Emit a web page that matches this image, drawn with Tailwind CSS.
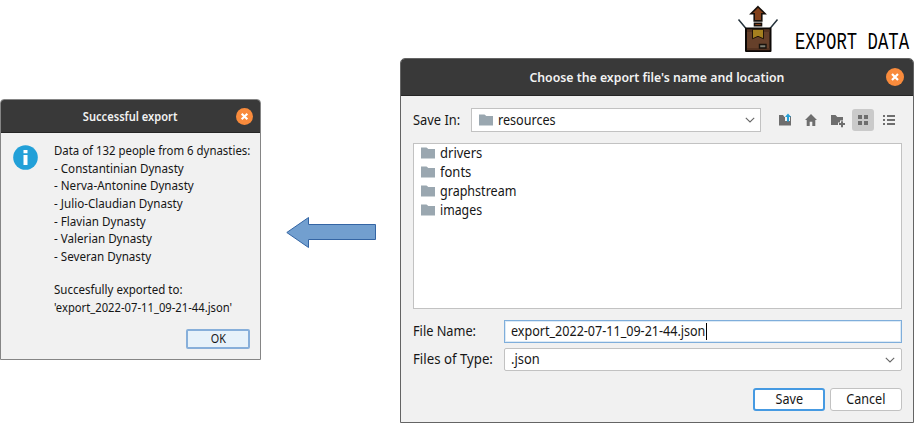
<!DOCTYPE html>
<html lang="en">
<head>
<meta charset="utf-8">
<title>Export data</title>
<script src="https://cdn.jsdelivr.net/npm/@tailwindcss/browser@4"></script>
</head>
<body class="relative h-[425px] w-[916px] overflow-hidden bg-white font-['Noto_Sans',sans-serif] text-[#161616]">

<svg class="hidden">
  <symbol id="folder" viewBox="0 0 14 12"><path d="M0 .5h5.500L7.300 2H14v9.500H0z" fill="#9aa7b0"/></symbol>
  <symbol id="chevron" viewBox="0 0 10 6"><path d="M.8.8 5 5 9.200.8" fill="none" stroke="#666" stroke-width="1.100"/></symbol>
  <symbol id="close" viewBox="0 0 18 18"><circle cx="9" cy="9" r="9" fill="#f98b3c"/><path d="m6 6 6 6m0-6-6 6" stroke="#fff" stroke-width="2.200"/></symbol>
</svg>

<!-- Heading -->
<header class="absolute left-[737px] top-[5px] flex">
  <svg class="h-[48px] w-[42px]" viewBox="0 0 42 48">
    <path d="m1.500 14.500 7.500 9M40.500 14.500l-7.500 9" stroke="#26333c" stroke-width="1.500" fill="none"/>
    <path d="M9 23.500h24.500V46H9z" fill="#66402a" stroke="#0d0907" stroke-width="2" stroke-linejoin="round"/>
    <path d="M10 24.500h22.500v2.500H10zM10 43h22.500v2.200H10z" fill="#553321"/>
    <path d="M15.500 24.300h11v9.500L21 31.300l-5.500 2.500z" fill="#a5801f" stroke="#211508" stroke-width="1"/>
    <path d="M22.500 39.500h6.500v3.500h-6.500z" fill="#7e7e72" stroke="#17120d" stroke-width="1.400"/>
    <path d="m21 1.700 7 7h-3.200v7.200h-7.600V8.700H14zM17.500 18.300h7v2.500h-7z" fill="#83401a" stroke="#17100b" stroke-width="1.600"/>
  </svg>
  <h1 class="ml-[16px] mt-[26px] origin-left scale-x-[.72] whitespace-nowrap font-['Liberation_Mono',monospace] text-[24px] leading-[24px] text-black">EXPORT DATA</h1>
</header>

<!-- Confirmation dialog -->
<section class="absolute left-0 top-[99px] h-[261px] w-[261px] rounded-t-[4px] border border-[#858585] bg-[#f1f1f1]">
  <div class="relative flex h-[33px] items-center justify-center rounded-t-[3px] border-b border-[#252525] bg-[#393939]">
    <h2 class="origin-center scale-x-[.925] whitespace-nowrap pt-px text-[12px] font-semibold text-[#f2f2f2]">Successful export</h2>
    <svg class="absolute right-[7px] top-[8px] size-[17px]"><use href="#close"/></svg>
  </div>
  <div class="flex">
    <svg class="ml-[12px] mt-[12px] size-[25px] shrink-0" viewBox="0 0 25 25"><circle cx="12.500" cy="12.500" r="12.300" fill="#22a0d8"/><path d="M10.500 5h4v3.200h-4zM10.500 10h4v10h-4z" fill="#fff"/></svg>
    <div class="ml-[16px] mt-[9px] w-[200px] origin-left scale-x-[.95] whitespace-nowrap text-[12px] leading-[17.640px]">
      <p>Data of 132 people from 6 dynasties:</p>
      <div class="origin-left scale-x-[1.02]">
        <p>- Constantinian Dynasty</p>
        <p>- Nerva-Antonine Dynasty</p>
        <p>- Julio-Claudian Dynasty</p>
        <p>- Flavian Dynasty</p>
        <p>- Valerian Dynasty</p>
        <p>- Severan Dynasty</p>
      </div>
      <p class="mt-[16px] origin-left scale-x-[1.010]">Succesfully exported to:</p>
      <p class="origin-left scale-x-[.985]">'export_2022-07-11_09-21-44.json'</p>
    </div>
  </div>
  <button class="absolute bottom-[10px] right-[10px] h-[20px] w-[64px] rounded-[2px] border-2 border-[#87afda] bg-[#e7f2fa] text-[12px] leading-[16px]"><span class="inline-block scale-x-[.9]">OK</span></button>
</section>

<svg class="absolute left-[286px] top-[216px] h-[33px] w-[91px]" viewBox="0 0 91 33"><path d="M.8 16.500 22.500 1.500v7H89.500v15H22.500v8z" fill="#729fcf" stroke="#3465a4"/></svg>

<!-- File chooser -->
<section class="absolute left-[400px] top-[58px] flex h-[365px] w-[514px] flex-col rounded-t-[5px] border border-[#646464] bg-[#f1f1f1] text-[14px]">
  <div class="relative flex h-[37px] shrink-0 items-center justify-center rounded-t-[4px] border-b border-[#252525] bg-[#393939]">
    <h2 class="origin-center scale-x-[.945] whitespace-nowrap pt-px text-[13px] font-semibold text-[#f2f2f2]">Choose the export file's name and location</h2>
    <svg class="absolute right-[9px] top-[9px] size-[18px]" viewBox="0 0 18 18"><use href="#close"/></svg>
  </div>

  <div class="ml-[12px] mt-[12px] flex h-[24px] items-center">
    <label class="w-[58px] whitespace-nowrap pb-[2px]"><span class="inline-block origin-left scale-x-[.92]">Save In:</span></label>
    <div class="flex h-[24px] w-[290px] items-center border border-[#c2c2c2] bg-white pl-[7px] pr-[5px]">
      <svg class="h-[12px] w-[14px]"><use href="#folder"/></svg>
      <span class="ml-[5px] origin-left scale-x-[.9] pb-[2px]">resources</span>
      <svg class="ml-auto h-[6px] w-[10px]"><use href="#chevron"/></svg>
    </div>
    <div class="ml-[13px] flex items-center gap-[4px]">
      <svg class="size-[22px]" viewBox="0 0 22 22"><path d="M5 6h4l1.500 2H11v4h5V7h1v9.500H5z" fill="#6e6e6e"/><path d="M13 12.500V8h-2L14 4.500 17 8h-2v4.500z" fill="#22a0d8"/></svg>
      <svg class="size-[22px]" viewBox="0 0 22 22"><path d="m11 5 6 6h-1.700v6h-3v-4.200H9.700V17h-3v-6H5z" fill="#6e6e6e"/></svg>
      <svg class="size-[22px]" viewBox="0 0 22 22"><path d="M5 6h4.500l1.800 2H17v3.500h-3V13.500h-2V16H5z" fill="#6e6e6e"/><path d="M15 12.200h2V14h2v2h-2v2.200h-2V16h-2v-2h2z" fill="#6e6e6e"/></svg>
      <span class="size-[22px] rounded-[3px] bg-[#cacaca]"><svg class="size-[22px]" viewBox="0 0 22 22"><path d="M6 6h4v4H6zM12 6h4v4h-4zM6 12h4v4H6zM12 12h4v4h-4z" fill="#6e6e6e"/></svg></span>
      <svg class="size-[22px]" viewBox="0 0 22 22"><path d="M5 6h2v2H5zM5 10h2v2H5zM5 14h2v2H5zM9 6h8v2H9zM9 10h8v2H9zM9 14h8v2H9z" fill="#6e6e6e"/></svg>
    </div>
  </div>

  <ul class="ml-[12px] mt-[11px] h-[166px] w-[489px] border border-[#c2c2c2] bg-white pl-[7px] leading-[19px]">
    <li class="-mt-px flex h-[19px] items-center"><svg class="mr-[5px] h-[12px] w-[14px]"><use href="#folder"/></svg><span class="origin-left scale-x-[.93]">drivers</span></li>
    <li class="flex h-[19px] items-center"><svg class="mr-[5px] h-[12px] w-[14px]"><use href="#folder"/></svg><span class="origin-left scale-x-[.93]">fonts</span></li>
    <li class="flex h-[19px] items-center"><svg class="mr-[5px] h-[12px] w-[14px]"><use href="#folder"/></svg><span class="origin-left scale-x-[.895]">graphstream</span></li>
    <li class="flex h-[19px] items-center"><svg class="mr-[5px] h-[12px] w-[14px]"><use href="#folder"/></svg><span class="origin-left scale-x-[.88]">images</span></li>
  </ul>

  <div class="ml-[12px] mt-[11px] flex h-[23px] items-center">
    <label class="w-[91px] whitespace-nowrap pb-[2px]"><span class="inline-block origin-left scale-x-[.91]">File Name:</span></label>
    <div class="flex h-[23px] w-[398px] items-center border border-[#7faedb] bg-white pl-[6px] shadow-[inset_0_0_0_1px_#dceaf6]">
      <span class="w-[195px] origin-left scale-x-[.897] whitespace-nowrap pb-[2px]">export_2022-07-11_09-21-44.json</span>
      <span class="h-[17px] w-px bg-black"></span>
    </div>
  </div>
  <div class="ml-[12px] mt-[5px] flex h-[23px] items-center">
    <label class="w-[91px] whitespace-nowrap pb-[2px]"><span class="inline-block origin-left scale-x-[.945]">Files of Type:</span></label>
    <div class="flex h-[23px] w-[398px] items-center rounded-[2px] border border-[#c2c2c2] bg-white pl-[6px] pr-[6px]">
      <span class="origin-left scale-x-[.92] pb-[2px]">.json</span>
      <svg class="ml-auto h-[6px] w-[10px]"><use href="#chevron"/></svg>
    </div>
  </div>

  <div class="mr-[11px] mt-[17px] flex justify-end gap-[5px]">
    <button class="h-[23px] w-[72px] rounded-[3px] border-2 border-[#469ae2] bg-white pb-[2px] leading-[17px]"><span class="inline-block scale-x-[.9]">Save</span></button>
    <button class="h-[23px] w-[72px] rounded-[3px] border border-[#c2c2c2] bg-white pb-[2px] leading-[19px]"><span class="inline-block scale-x-[.9]">Cancel</span></button>
  </div>
</section>
</body>
</html>
